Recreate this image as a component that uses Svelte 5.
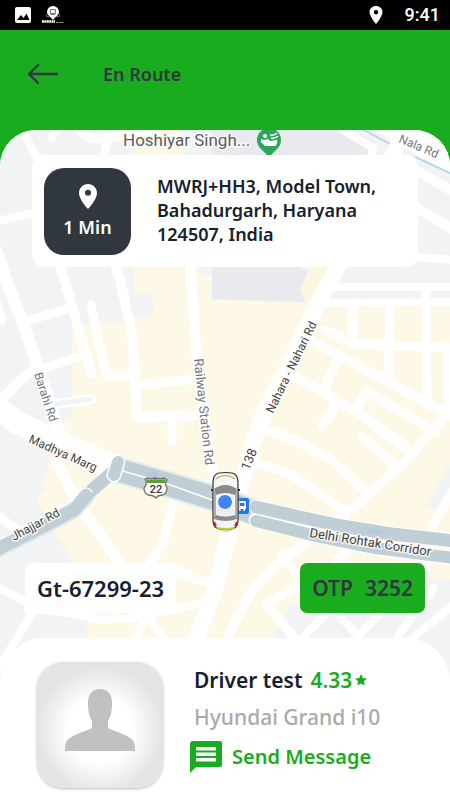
<script>
  const trip = {
    eta: '1 Min',
    address: 'MWRJ+HH3, Model Town, Bahadurgarh, Haryana 124507, India',
    plate: 'Gt-67299-23',
    otp: '3252',
    driver: 'Driver test',
    rating: '4.33',
    car: 'Hyundai Grand i10'
  };

  const streets = [
    { w: 8, d: 'M24 134L38 160M57 128L52 138M108 140L103 158M-2 221L36 212M415 257L452 260M335 287H452M324 303L452 302' },
    { w: 9, d: 'M78 128Q88 142 107 138L150 130M440 142L452 150' },
    { w: 12, d: 'M-3 252L8 285L22 320L37 363L62 440' },
    { w: 10, d: 'M58 260L66 285L91 373M114 262L120 280L132 333L137 417L203 415' },
    { w: 9, d: 'M91 305L106 375H136M138 385L197 379M23 322L70 308M38 370L84 355M172 418V441M-2 306L2 320' },
    { w: 10, d: 'M38 366L15 385L-2 404M190 262L197 363L206 430L214 480L224 530' },
    { w: 23, d: 'M-8 405L20 424L60 443L115 467' },
    { w: 11, d: 'M56 462L76 500L122 567' },
    { w: 9, d: 'M174 500L163 543L148 567M-4 515L16 529M170 568L214 585' },
    { w: 16, d: 'M404 132L336 270L320 300L262 418L254 440L240 490L215 590L192 648' },
    { w: 10, d: 'M412 168L454 192M412 205L454 230' },
    { w: 9, d: 'M353 303V344M390 303L388 382M426 290L427 403M448 350V415' },
    { w: 9, d: 'M325 330L355 344L452 348M308 339L385 380L447 414M290 374L340 402L365 417L404 445' },
    { w: 9, d: 'M338 358L325 388M336 404L322 426M358 407L366 391L436 432M448 413L425 438L412 455L370 493L342 517L282 560L252 590L228 636' },
    { w: 9, d: 'M361 436L398 467M372 424L413 455M256 426L295 440L332 460L368 493M250 460L292 475L345 511' },
    { w: 9, d: 'M452 492L433 524L428 550L424 580M281 555L296 573M352 545L330 569L266 604L298 642' },
    { w: 8, d: 'M33 612L-3 670M-4 586L30 604M28 610Q66 610 92 618T218 598M145 617L134 642M148 617L166 642' },
    { w: 8, d: 'M325 600L358 636L386 608M434 588L398 636M456 603L410 640M298 642L330 610' }
  ];

  const labels = [
    { t: 'Barahi Rd', x: 34, y: 374, a: 72, s: 12, c: '#757575' },
    { t: 'Railway Station Rd', x: 194, y: 359, a: 84, s: 13, c: '#757575' },
    { t: 'Nahara - Nahari Rd', x: 273, y: 414, a: -64, s: 12, c: '#444' },
    { t: '138', x: 249, y: 471, a: -68, s: 13, c: '#444' },
    { t: 'Madhya Marg', x: 28, y: 442, a: 24, s: 12, c: '#444' },
    { t: 'Jhajjar Rd', x: 14, y: 541, a: -29, s: 12, c: '#444' },
    { t: 'Delhi Rohtak Corridor', x: 309, y: 537, a: 9, s: 13, c: '#444' },
    { t: 'Nala Rd', x: 398, y: 142, a: 23, s: 12, c: '#777' },
    { t: 'Hoshiyar Singh...', x: 123, y: 146, a: 0, s: 17, c: '#5c5c5c' }
  ];
</script>

<div class="app">
  <div class="status">
    <svg class="photo" viewBox="0 0 18 18" aria-hidden="true">
      <rect x="1" y="1" width="16" height="16" rx="2" fill="#fff" />
      <path d="M3 14l4-5 2.500 3 3-4.500 3 6.500z" fill="#000" />
    </svg>
    <svg class="brand" viewBox="0 0 22 18" aria-hidden="true">
      <path d="M11 0a6 6 0 0 1 6 6c0 3-3 4-6 8C8 10 5 9 5 6a6 6 0 0 1 6-6z" fill="#fff" />
      <path d="M8.500 3.500h5v4h-5zM9 8.500h4M5 8l-1 2 4 1M17 8l1 2-4 1" fill="none" stroke="#777" />
      <path d="M0 15.500h13" stroke="#fff" stroke-width="2.500" stroke-dasharray="2 .4" />
      <path d="M14 16.500h8" stroke="#aaa" stroke-dasharray="2 .6" />
    </svg>
    <span class="spring"></span>
    <svg class="gps" viewBox="0 0 14 20" aria-hidden="true">
      <path fill-rule="evenodd" d="M7 1C3.500 1 .500 3.500.500 7c0 4.500 6.500 12 6.500 12s6.500-7.500 6.500-12c0-3.500-3-6-6.500-6zm0 4a2.200 2.200 0 1 1 0 4.400A2.200 2.200 0 0 1 7 5z" fill="#fff" />
    </svg>
    <time>9:41</time>
  </div>

  <header>
    <button class="back" aria-label="Back">
      <svg viewBox="0 0 32 22" aria-hidden="true">
        <path d="M11 2L2 11l9 9M2 11h28" fill="none" stroke="#30373f" stroke-width="2.400" stroke-linecap="round" stroke-linejoin="round" />
      </svg>
    </button>
    <h1>En Route</h1>
  </header>

  <main>
    <svg class="map" viewBox="0 130 450 670" preserveAspectRatio="xMidYMin slice" aria-label="Map">
      <rect x="-500" y="130" width="1500" height="670" fill="#f1f3f4" />
      <path d="M134 128H180L200 275H212V299L305 303L330 262H450V290L420 292L330 306H450V465L425 507L440 510L450 500V580L424 577L290 605L272 640V690H83L88 620L68 570L72 558L50 525L36 497L47 488L42 487L50 458L64 430L65 420L72 418V327L154 316L152 292L134 294Z" fill="#fef8e7" />
      <path d="M212 128H345L374 142L376 152L300 270L307 270L305 302L212 299Z" fill="#e8eaed" />
      <path d="M312 262L300 290L306 303L330 262Z" fill="#fef6df" />
      <path d="M330 262H450V290L420 292L380 299H320Z" fill="#f1f3f4" />
      <path d="M340 128L373 148L370 160" fill="none" stroke="#fff" stroke-width="8" />
      <path d="M376 128L454 172" stroke="#fff" stroke-width="5" />
      <path d="M390 118L460 158" stroke="#fff" stroke-width="36" />
      {#each streets as s}
        <path d={s.d} fill="none" stroke="#fff" stroke-width={s.w} stroke-linecap="round" stroke-linejoin="round" />
      {/each}
      <path d="M362 129L390 144M415 157L452 174" stroke="#a9d3ee" stroke-width="1.500" />
      <path d="M55 404L91 399" stroke="#fff" stroke-width="10" stroke-linecap="round" />
      <path d="M57 404L90 399" stroke="#f1f3f4" stroke-width="5" stroke-linecap="round" />

      <g fill="none" stroke-linejoin="round">
        <path d="M118 470L170 485L226 502L254 512" stroke="#e2eef1" stroke-width="27" />
        <path d="M118 470L170 485L226 502L254 513" stroke="#c0cfd5" stroke-width="23" />
        <path d="M119 470L165 483L226 505" stroke="#fff" stroke-width="1.500" />
        <g stroke-linecap="round">
          <path d="M-4 550L40 528L74 510L87 495" stroke="#dceaee" stroke-width="17" />
          <path d="M256 520L312 534L375 548L454 558" stroke="#fff" stroke-width="15" />
          <path d="M92 490L114 471" stroke="#c0cfd5" stroke-width="13" />
          <path d="M-4 550L40 528L74 510L87 495" stroke="#c0cfd5" stroke-width="13" />
          <path d="M256 521L312 535L375 548L454 558" stroke="#c0cfd5" stroke-width="12" />
          <path d="M256 507L300 517L342 526L392 534L454 541" stroke="#fff" stroke-width="15" />
          <path d="M256 507L300 517L342 526L392 534L454 541" stroke="#c0cfd5" stroke-width="13" />
          <path d="M118 462L114 475" stroke="#fff" stroke-width="15" />
          <path d="M118 462L114 475" stroke="#c0cfd5" stroke-width="12" />
          <path d="M-2 540L55 510L72 501L80 490Q87 485 92 492" stroke="#fff" stroke-width="1.300" />
        </g>
      </g>
      <path d="M146 472q5-2 10 0l4 5h-12z" fill="#b9c8e2" />
      <path d="M369 529h8l-1-3 9 6-9 4v-3h-8z" fill="#b7c9e0" />

      {#each labels as l}
        <text class="road" transform="translate({l.x} {l.y}) rotate({l.a})" font-size={l.s} fill={l.c}>{l.t}</text>
      {/each}

      <path d="M145 479l2-1 4 1 4-1 5 1 4-1 3 2q-3 4 0 8 0 5-4 7-5 0-7 3-3-3-8-3-4-2-4-7 4-4 1-9z" fill="#fff" stroke="#77716c" stroke-width="1.300" />
      <path d="M146 479l5 1 4-1 5 1 4-1 2 2-1 2h-18z" fill="#5f9e37" />
      <text class="shield" x="156" y="493" text-anchor="middle" font-size="11">22</text>

      <path d="M269 157l-8-8a12 12 0 1 1 16 0z" fill="#2fa65a" />
      <circle cx="265" cy="136" r="2" fill="#fff" />
      <path d="M261 139l3 1 4-1 2 2 7-1q1 4-2 6h-10l-4-4z" fill="#fff" />
      <path d="M270 135q4 1 7-2M271 138q4 1 7-2" stroke="#fff" stroke-width="1.300" fill="none" />

      <rect x="233" y="498" width="16" height="16" rx="2" fill="#2276e8" />
      <path d="M239 501h6l1 1v7h-1v2h-1.500v-2h-3v2h-1.500v-2h-1v-7z" fill="#fff" />
      <path d="M240 503h4.500v3h-4.500z" fill="#2276e8" />

      <ellipse cx="226" cy="503" rx="14" ry="29" fill="#9997" />
      <path d="M213 483q0-9 6-10 7-1 13 0 6 1 6 10v37q0 8-6 9-7 1-13 0-6-1-6-9z" fill="#f5f5f4" stroke="#333" stroke-width="1.200" />
      <path d="M216 479q9-7 19 0" fill="none" stroke="#c6bf7b" stroke-width="1.500" />
      <path d="M214 489q11-8 23 0l-2 6q-10-4-19 0z" fill="#8b8b8b" />
      <path d="M215 491v28M236 491v28" stroke="#999" stroke-width="1.500" />
      <path d="M216 515q9 3 19 0l2 4q-11 4-23 0z" fill="#8b8b8b" />
      <path d="M217 495q8-3 17 0v20h-17z" fill="#eeeeed" />
      <path d="M217 528q9 2 17 0" stroke="#c8cf24" stroke-width="2" fill="none" />
      <path d="M214 522l2 4M237 522l-2 4" stroke="#d22" stroke-width="2" />
      <path d="M211 490h2M238 490h2" stroke="#333" stroke-width="2" />
      <circle cx="225" cy="502" r="7.500" fill="#4285f4" stroke="#fff" />
    </svg>

    <section class="destination">
      <div class="eta">
        <svg viewBox="0 0 18 25" aria-hidden="true">
          <path fill-rule="evenodd" d="M9 0C4 0 0 4 0 9c0 6.500 9 16 9 16s9-9.500 9-16c0-5-4-9-9-9zm0 5.800a3 3 0 1 1 0 6 3 3 0 0 1 0-6z" fill="#fff" />
        </svg>
        <span>{trip.eta}</span>
      </div>
      <p>{trip.address}</p>
    </section>

    <div class="bottom">
      <div class="tags">
        <span class="plate">{trip.plate}</span>
        <span class="otp"><span>OTP</span><span>{trip.otp}</span></span>
      </div>
      <section class="sheet">
        <div class="avatar">
          <svg viewBox="0 0 72 64" aria-hidden="true">
            <path d="M36 1c9 0 13 7 12 17-.500 8-2 12-4 15v7c8 4 17 6 22 10 5 3 5 7 5 13H1c0-6 0-10 5-13 5-4 14-6 22-10v-7c-2-3-3.500-7-4-15C23 8 27 1 36 1z" fill="#c1c1c1" />
          </svg>
        </div>
        <div class="info">
          <h2>{trip.driver} <span>{trip.rating}<svg viewBox="0 0 12 12" aria-hidden="true"><path d="M6 0l1.800 3.900 4.200.500-3.100 2.900.900 4.200L6 9.400l-3.800 2.100.900-4.200L0 4.400l4.200-.500z" fill="#19ac1f" /></svg></span></h2>
          <p class="car">{trip.car}</p>
          <button class="message">
            <svg viewBox="0 0 32 32" aria-hidden="true">
              <path fill-rule="evenodd" d="M3 0h27q2 0 2 2v22q0 2-2 2H6l-6 6V3q0-3 3-3zm3 6v3.500h20V6zm0 5.500V15h20v-3.500zM6 17v3.500h20V17z" fill="#19ac1f" />
            </svg>
            Send Message
          </button>
        </div>
      </section>
    </div>
  </main>
</div>

<style>
  :global(body) { margin: 0; background: #fff; }
  .app {
    min-height: 100vh;
    display: flex;
    flex-direction: column;
    background: #19ac1f;
    color: #17202d;
    font-family: 'Noto Sans', sans-serif;
    font-weight: 600;
  }
  h1, h2, p { margin: 0; }
  svg { display: block; }
  button { border: 0; padding: 0; background: none; font: inherit; cursor: pointer; }
  .status {
    height: 30px;
    padding: 0 10px 0 14px;
    background: #000;
    color: #fff;
    display: flex;
    align-items: center;
    box-sizing: border-box;
  }
  .photo { width: 18px; }
  .brand { width: 22px; margin-left: 10px; }
  .spring { flex: 1; }
  .gps { width: 14px; margin-right: 22px; }
  time { font: 500 18px/24px Roboto, sans-serif; }
  header {
    height: 100px;
    padding: 0 27px 12px;
    display: flex;
    align-items: center;
    gap: 44px;
    box-sizing: border-box;
  }
  .back svg { width: 32px; }
  h1 { font-size: 18px; line-height: 24px; font-weight: 600; color: #30373f; }
  main {
    position: relative;
    flex: 1;
    display: flex;
    flex-direction: column;
    justify-content: space-between;
    border-radius: 36px 36px 0 0;
    overflow: hidden;
    background: #f1f3f4;
  }
  .map { position: absolute; inset: 0; width: 100%; height: 100%; }
  .road { font-family: Roboto, sans-serif; font-weight: 400; paint-order: stroke; stroke: #fffc; stroke-width: 3px; stroke-linejoin: round; }
  .shield { font-family: Roboto, sans-serif; font-weight: 500; fill: #333; }
  .destination {
    position: relative;
    margin: 25px 32px 0;
    padding: 13px 12px 12px;
    display: flex;
    align-items: flex-start;
    gap: 26px;
    border-radius: 12px;
    background: #fff;
  }
  .eta {
    flex: none;
    width: 87px;
    height: 87px;
    display: flex;
    flex-direction: column;
    align-items: center;
    justify-content: center;
    gap: 6px;
    border-radius: 20px;
    background: #30373f;
    color: #fff;
    font-size: 18px;
    line-height: 24px;
  }
  .eta svg { width: 18px; }
  .destination p { padding-top: 6px; font-size: 18px; line-height: 24px; }
  .bottom { position: relative; display: flex; flex-direction: column; gap: 25px; }
  .tags { display: flex; justify-content: space-between; padding: 0 25px; font-size: 22px; line-height: 26px; }
  .plate { padding: 12px; border-radius: 10px; background: #fff; }
  .otp { display: flex; gap: 12px; padding: 12px; border-radius: 7px; background: #19ac1f; color: #30373f; font-size: 21px; }
  .sheet {
    display: flex;
    align-items: flex-start;
    gap: 31px;
    padding: 24px 20px 12px 37px;
    border-radius: 44px 44px 0 0;
    background: #fff;
  }
  .avatar {
    flex: none;
    width: 126px;
    height: 126px;
    display: flex;
    align-items: center;
    justify-content: center;
    border-radius: 26px;
    background: radial-gradient(circle at 50% 54%, #fff 35%, #e4e4e4 68%);
    box-shadow: 0 1px 3px #0004;
  }
  .avatar svg { width: 72px; margin-top: -10px; }
  .info { display: flex; flex-direction: column; gap: 11px; align-items: flex-start; padding-top: 5px; }
  h2 { display: flex; gap: 8px; font-size: 21px; line-height: 26px; font-weight: 600; }
  h2 span { display: flex; align-items: center; gap: 3px; color: #19ac1f; }
  h2 svg { width: 12px; }
  .car { font-size: 21px; line-height: 26px; font-weight: 500; color: #aaa; }
  .message {
    display: flex;
    align-items: center;
    gap: 10px;
    margin-left: -4px;
    color: #19ac1f;
    font-size: 20px;
    line-height: 26px;
  }
  .message svg { width: 32px; }
</style>
